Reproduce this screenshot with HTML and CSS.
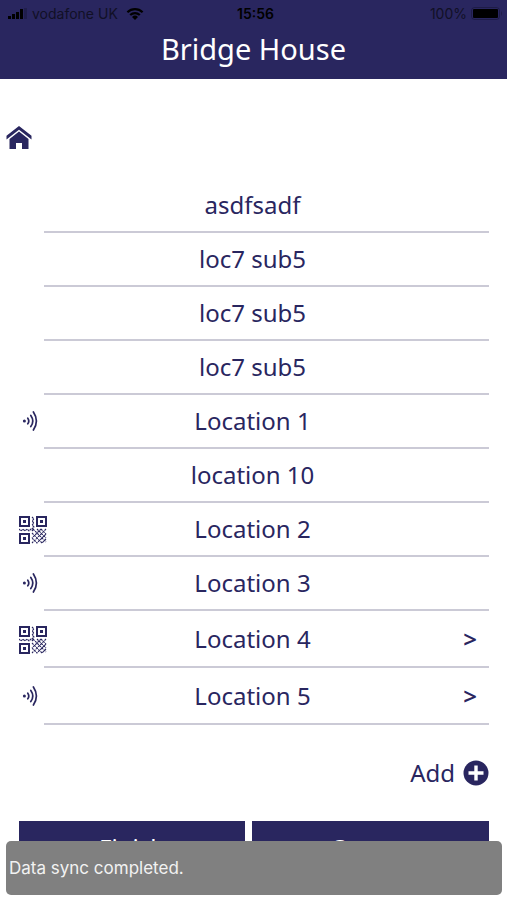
FILE: index.html
```html
<!DOCTYPE html>
<html lang="en">
<head>
<meta charset="utf-8">
<meta name="viewport" content="width=device-width, initial-scale=1">
<title>Bridge House</title>
<link rel="stylesheet" href="styles.css">
</head>
<body>
<svg class="defs" aria-hidden="true">
  <symbol id="nfc" viewBox="0 0 18 20">
    <circle cx="2.4" cy="10" r="1.5" fill="currentColor"/>
    <path d="M5.800 7.200q2 2.800 0 5.600M8.800 4.400q4 5.600 0 11.200M11.400 1q6 9 0 18" fill="none" stroke="currentColor" stroke-width="1.700" stroke-linecap="round"/>
  </symbol>
  <symbol id="qr" viewBox="0 0 28 28">
    <path d="M1 1h9v9H1zM18 1h9v9h-9zM1 18h9v9H1z" fill="none" stroke="currentColor" stroke-width="2"/>
    <path d="M4 4h3v3H4zM21 4h3v3h-3zM4 21h3v3H4z" fill="currentColor"/>
    <path d="M13 1l2 2-2 2 2 2-2 2 2 2-2 2M0 13l2 2 2-2 2 2 2-2 2 2 2-2 2 2M14 13l13 13M18 13l9 9M22 13l5 5M13 17l10 10M13 22l5 5M27 13L13 27M22 13l-9 9M27 18l-9 9M27 23l-4 4" fill="none" stroke="currentColor" stroke-width="1.100" stroke-dasharray="2.200 .8"/>
  </symbol>
</svg>
<header class="header">
  <div class="status">
    <span class="carrier">
      <svg width="20" height="12" viewBox="0 0 20 12" aria-hidden="true"><path d="M0 8h3v3H0zM4 6h3v5H4zM8 4h3v7H8zM12 1h3v10h-3z"/><path d="M16 0h3v11h-3z" opacity=".2"/></svg>
      vodafone UK
      <svg width="18" height="12" viewBox="0 0 18 12" aria-hidden="true"><path d="M1.400 4.200a11 11 0 0 1 15.200 0M4.200 7a7 7 0 0 1 9.600 0" fill="none" stroke="#000" stroke-width="2.200"/><path d="M9 12L6 9a4.400 4.400 0 0 1 6 0z"/></svg>
    </span>
    <span class="clock">15:56</span>
    <span class="power">100%
      <svg width="32" height="14" viewBox="0 0 32 14" aria-hidden="true"><rect x=".5" y=".5" width="28" height="12" rx="3" fill="none" stroke="#000" opacity=".25"/><rect x="2" y="2" width="25" height="9" rx="1"/><path d="M30 4q2 2.500 0 5z" opacity=".25"/></svg>
    </span>
  </div>
  <h1 class="title">Bridge House</h1>
</header>
<main class="main">
  <a class="home" href="#" aria-label="Home"><svg width="26" height="24" viewBox="0 0 26 24" aria-hidden="true"><path d="M13 0L25.500 9.800V13.400L13 3.800 .5 13.400V9.800z"/><path d="M13 5.500L22.500 13V23H16v-6h-6v6H3.500V13z"/></svg></a>
  <ul class="list">
    <li class="row"><a class="name" href="#">asdfsadf</a></li>
    <li class="row"><a class="name" href="#">loc7 sub5</a></li>
    <li class="row"><a class="name" href="#">loc7 sub5</a></li>
    <li class="row"><a class="name" href="#">loc7 sub5</a></li>
    <li class="row"><svg class="nfc" aria-hidden="true"><use href="#nfc"/></svg><a class="name" href="#">Location 1</a></li>
    <li class="row"><a class="name" href="#">location 10</a></li>
    <li class="row"><svg class="qr" aria-hidden="true"><use href="#qr"/></svg><a class="name" href="#">Location 2</a></li>
    <li class="row"><svg class="nfc" aria-hidden="true"><use href="#nfc"/></svg><a class="name" href="#">Location 3</a></li>
    <li class="row parent"><svg class="qr" aria-hidden="true"><use href="#qr"/></svg><a class="name" href="#">Location 4</a><button class="open" type="button" aria-label="Open Location 4">&gt;</button></li>
    <li class="row parent"><svg class="nfc" aria-hidden="true"><use href="#nfc"/></svg><a class="name" href="#">Location 5</a><button class="open" type="button" aria-label="Open Location 5">&gt;</button></li>
  </ul>
  <button class="add" type="button">Add
    <svg width="26" height="26" viewBox="0 0 26 26" aria-hidden="true"><circle cx="13" cy="13" r="12.500"/><path d="M13 5.500v15M5.500 13h15" stroke="#fff" stroke-width="3.400"/></svg>
  </button>
  <div class="actions">
    <button class="action" type="button">Finish</button>
    <button class="action" type="button">Survey</button>
  </div>
</main>
<div class="toast" role="status">Data sync completed.</div>
</body>
</html>
```
FILE: styles.css
```css
* { box-sizing: border-box; }
body {
  margin: 0;
  background: #fff;
  color: #29265f;
  font-family: "Noto Sans", sans-serif;
  font-size: 24px;
  line-height: 32px;
}
button { font: inherit; color: inherit; border: 0; padding: 0; background: none; }
a { color: inherit; text-decoration: none; }
svg { fill: currentColor; }
.defs { position: absolute; width: 0; height: 0; }
.header { background: #29265f; height: 79px; }
.status {
  display: grid;
  grid-template-columns: 1fr auto 1fr;
  align-items: center;
  height: 28px;
  padding: 0 4px 0 8px;
  color: #000;
  font-family: Inter, sans-serif;
  font-size: 14px;
  line-height: 20px;
}
.carrier, .power { display: flex; align-items: center; gap: 4px; }
.carrier { gap: 8px; color: #111026; }
.carrier svg { color: #000; }
.carrier svg:first-child { margin-right: -4px; }
.power { justify-content: flex-end; color: #111026; }
.power svg { color: #000; }
.clock { font-weight: 600; }
.title {
  margin: 0;
  padding-top: 3px;
  color: #fff;
  font-size: 29px;
  line-height: 36px;
  font-weight: 400;
  text-align: center;
}
.main { padding: 47px 18px 0; }
.home { display: block; width: 26px; height: 24px; margin-left: -12px; }
.home svg { display: block; }
.list { list-style: none; margin: 29px 0 0; padding: 0 0 0 26px; }
.row {
  position: relative;
  display: flex;
  align-items: center;
  height: 54px;
  border-bottom: 2px solid #cbcad6;
}
.parent { height: 57px; }
.name { flex: 1; text-align: center; padding-right: 28px; }
.nfc { position: absolute; left: -22px; width: 18px; height: 20px; }
.qr { position: absolute; left: -25px; width: 28px; height: 28px; margin-top: 2px; }
.open { position: absolute; right: 12px; font-weight: 600; }
.add { display: flex; align-items: center; gap: 8px; margin: 32px 0 0 auto; }
.actions { display: grid; grid-template-columns: 226px 1fr; gap: 7px; margin: 32px 0 0; padding-left: 1px; }
.action { height: 54px; background: #29265f; color: #fff; }
.toast {
  position: fixed;
  left: 6px;
  right: 5px;
  bottom: 5px;
  height: 54px;
  padding: 0 3px;
  border-radius: 5px;
  background: #808080;
  color: #f2f2f2;
  font-family: Inter, sans-serif;
  font-size: 17px;
  line-height: 54px;
}
```
